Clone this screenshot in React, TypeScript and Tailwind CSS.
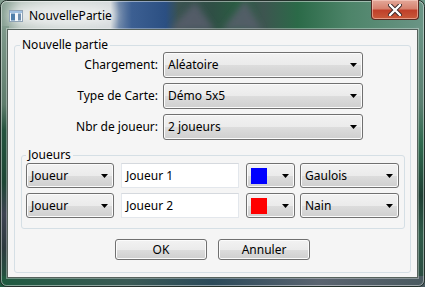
import React from "react";

function Arrow() {
  return (
    <svg width="7" height="4" viewBox="0 0 7 4" className="shrink-0">
      <path d="M0 0H7L3.5 4Z" fill="#000" />
    </svg>
  );
}

function Combo({ children, className }: { children: React.ReactNode; className: string }) {
  return (
    <div
      className={`flex items-center justify-between rounded-[3px] border border-[#707070] bg-[linear-gradient(#f2f2f2_0%,#ebebeb_50%,#dddddd_50%,#cfcfcf_100%)] shadow-[inset_0_0_0_1px_#fbfbfb] pl-[4px] pr-[5px] ${className}`}
    >
      <div className="flex items-center">{children}</div>
      <Arrow />
    </div>
  );
}

function Button({ children }: { children: React.ReactNode }) {
  return (
    <div className="flex h-[21px] w-[92px] items-center justify-center rounded-[3px] border border-[#707070] bg-[linear-gradient(#f2f2f2_0%,#ebebeb_50%,#dddddd_50%,#cfcfcf_100%)] shadow-[inset_0_0_0_1px_#fbfbfb]">
      {children}
    </div>
  );
}

function Background() {
  return (
    <svg className="absolute inset-0" width="425" height="287" viewBox="0 0 425 287">
      <defs>
        <linearGradient id="top" x1="0" y1="0" x2="1" y2="0">
          <stop offset="0" stopColor="#7f9a8c" />
          <stop offset="0.05" stopColor="#b9c6bf" />
          <stop offset="0.26" stopColor="#d3d8da" />
          <stop offset="0.28" stopColor="#6d86a8" />
          <stop offset="0.31" stopColor="#3c5f92" />
          <stop offset="0.39" stopColor="#2b4f82" />
          <stop offset="0.42" stopColor="#3a5250" />
          <stop offset="0.5" stopColor="#2f4f45" />
          <stop offset="0.56" stopColor="#2a5d42" />
          <stop offset="0.62" stopColor="#3d5550" />
          <stop offset="0.7" stopColor="#2b6a48" />
          <stop offset="0.82" stopColor="#4d8469" />
          <stop offset="1" stopColor="#6b9586" />
        </linearGradient>
        <linearGradient id="left" x1="0" y1="0" x2="0" y2="1">
          <stop offset="0" stopColor="#7f9a8c" />
          <stop offset="0.3" stopColor="#5e7c6c" />
          <stop offset="0.4" stopColor="#24533e" />
          <stop offset="0.6" stopColor="#1d4634" />
          <stop offset="0.72" stopColor="#3d4352" />
          <stop offset="0.85" stopColor="#2d3a3e" />
          <stop offset="1" stopColor="#1f5a40" />
        </linearGradient>
        <linearGradient id="right" x1="0" y1="0" x2="0" y2="1">
          <stop offset="0" stopColor="#6b9586" />
          <stop offset="0.3" stopColor="#5a7f70" />
          <stop offset="0.45" stopColor="#2f6a4e" />
          <stop offset="0.65" stopColor="#1e3f33" />
          <stop offset="0.8" stopColor="#2e5a48" />
          <stop offset="1" stopColor="#2a4a40" />
        </linearGradient>
        <linearGradient id="bottom" x1="0" y1="0" x2="1" y2="0">
          <stop offset="0" stopColor="#1f5a40" />
          <stop offset="0.3" stopColor="#3a5a55" />
          <stop offset="0.5" stopColor="#2b4a5a" />
          <stop offset="0.75" stopColor="#5a6470" />
          <stop offset="1" stopColor="#4a5a60" />
        </linearGradient>
        <filter id="blur" x="-10%" y="-10%" width="120%" height="120%">
          <feGaussianBlur stdDeviation="3" />
        </filter>
        <filter id="glow" x="-30%" y="-50%" width="160%" height="200%">
          <feGaussianBlur stdDeviation="6" />
        </filter>
      </defs>
      <rect x="0" y="0" width="425" height="287" fill="url(#top)" />
      <rect x="0" y="26" width="9" height="261" fill="url(#left)" />
      <rect x="416" y="26" width="9" height="261" fill="url(#right)" />
      <rect x="0" y="276" width="425" height="11" fill="url(#bottom)" />
      <g filter="url(#blur)">
        <polygon points="170,30 195,2 215,30" fill="#5b5f6e" opacity="0.8" />
        <polygon points="222,30 245,0 262,30" fill="#5b5f6e" opacity="0.8" />
      </g>
      <ellipse cx="62" cy="15" rx="54" ry="13" fill="#eef0f0" opacity="0.9" filter="url(#glow)" />
      <rect x="0.5" y="0.5" width="424" height="286" rx="6" fill="none" stroke="#23302b" />
      <rect x="1.5" y="1.5" width="422" height="284" rx="5" fill="none" stroke="#ffffff" strokeOpacity="0.45" />
    </svg>
  );
}

function AppIcon() {
  return (
    <svg width="14" height="12" viewBox="0 0 14 12" className="shrink-0">
      <rect x="0.5" y="0.5" width="13" height="11" fill="#f4f8fb" stroke="#8fa3b5" />
      <rect x="1" y="1" width="12" height="2" fill="#9fc0e0" />
      <rect x="2" y="3.5" width="4" height="7" fill="#4f7faa" />
      <rect x="9" y="3.5" width="3" height="7" fill="#6f8fae" />
    </svg>
  );
}

function CloseButton() {
  return (
    <div className="absolute right-[6px] top-0 flex h-[20px] w-[48px] items-center justify-center rounded-b-[4px] border border-t-0 border-[#5a2a22] bg-[linear-gradient(#e4a899_0%,#d6826f_45%,#c0402a_55%,#c85a3a_100%)] shadow-[inset_0_0_0_1px_rgba(255,220,210,0.5)]">
      <svg width="14" height="12" viewBox="0 0 14 12">
        <path d="M2 1L12 11M12 1L2 11" stroke="#3a2a2a" strokeWidth="4.2" strokeLinecap="round" />
        <path d="M2 1L12 11M12 1L2 11" stroke="#ffffff" strokeWidth="2.4" strokeLinecap="round" />
      </svg>
    </div>
  );
}

export default function App() {
  return (
    <div className="relative h-[287px] w-[425px] overflow-hidden font-['Noto_Sans',sans-serif] text-[12px] leading-[16px] text-black">
      <Background />
      <div className="relative flex h-[29px] items-center pl-[9px] pt-[2px]">
        <AppIcon />
        <span className="ml-[6px] text-[12px] text-black">NouvellePartie</span>
        <CloseButton />
      </div>
      <div className="relative mx-[7px] h-[249px] border border-[#56625c] bg-[#f5f5f5] shadow-[0_0_0_1px_rgba(255,255,255,0.35)]">
        <fieldset className="ml-[6px] mt-[8px] h-[235px] w-[397px] rounded-[3px] border border-[#d5dfe5]">
          <legend className="ml-[5px] px-[2px] leading-[14px]">Nouvelle partie</legend>
          <div className="grid grid-cols-[143px_200px] items-center gap-x-[5px] gap-y-[5px]">
            <div className="text-right">Chargement:</div>
            <Combo className="h-[26px] w-[200px]">Aléatoire</Combo>
            <div className="text-right">Type de Carte:</div>
            <Combo className="h-[26px] w-[200px]">Démo 5x5</Combo>
            <div className="text-right">Nbr de joueur:</div>
            <Combo className="h-[26px] w-[200px]">2 joueurs</Combo>
          </div>
          <fieldset className="ml-[6px] mt-[8px] h-[81px] w-[384px] rounded-[3px] border border-[#d5dfe5]">
            <legend className="ml-[4px] px-[2px] leading-[14px]">Joueurs</legend>
            <div className="flex flex-col gap-[5px] pl-[4px] pt-[1px]">
              {[
                { name: "Joueur 1", color: "bg-[#0000ff]", race: "Gaulois" },
                { name: "Joueur 2", color: "bg-[#ff0000]", race: "Nain" },
              ].map((p) => (
                <div key={p.name} className="flex h-[25px] items-center">
                  <Combo className="h-[25px] w-[88px]">Joueur</Combo>
                  <div className="ml-[7px] flex h-[25px] w-[118px] items-center border border-[#e3e7ec] border-t-[#d5d9de] bg-white pl-[4px]">
                    {p.name}
                  </div>
                  <Combo className="ml-[7px] h-[25px] w-[49px] pl-[3px]">
                    <div className={`h-[16px] w-[16px] ${p.color}`} />
                  </Combo>
                  <Combo className="ml-[5px] h-[25px] w-[99px]">{p.race}</Combo>
                </div>
              ))}
            </div>
          </fieldset>
          <div className="mt-[10px] flex justify-center gap-[11px]">
            <Button>OK</Button>
            <Button>Annuler</Button>
          </div>
        </fieldset>
      </div>
    </div>
  );
}
